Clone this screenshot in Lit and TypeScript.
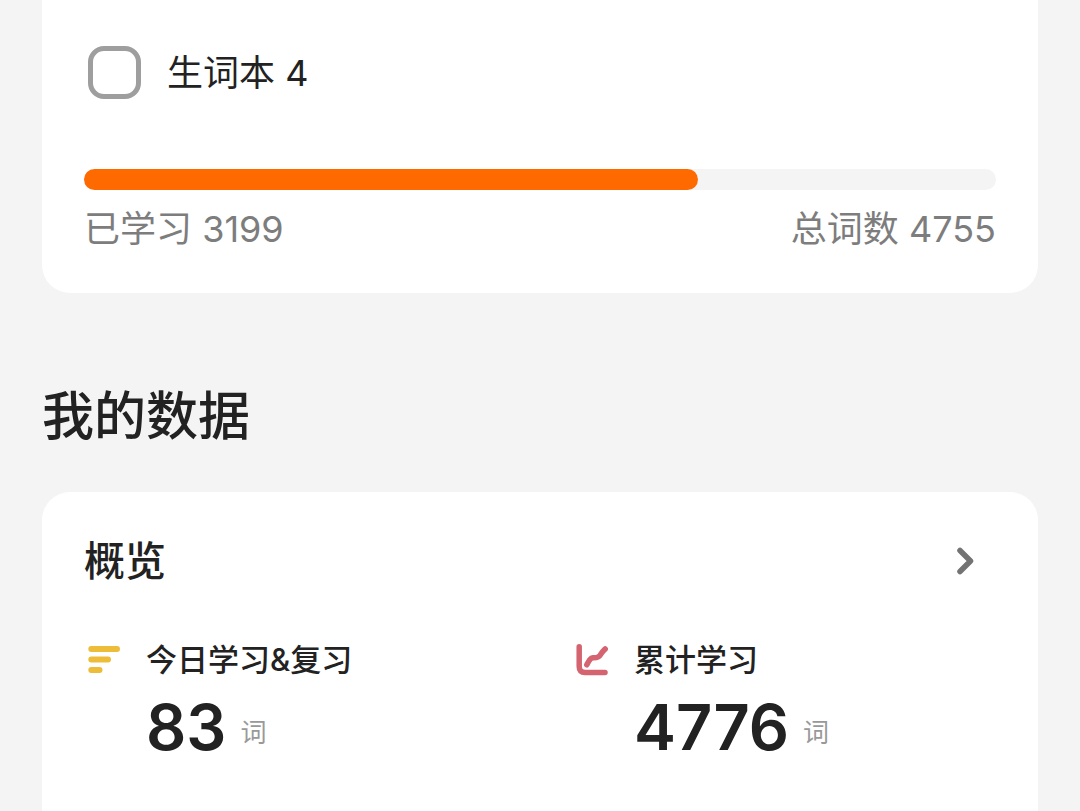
import { LitElement, html, css, svg } from "lit";
import { customElement, property, state } from "lit/decorators.js";

const barsIcon = svg`
  <svg viewBox="0 0 36 36" width="36" height="36" fill="none" stroke="#edbd3a" stroke-width="6" stroke-linecap="round" aria-hidden="true">
    <path d="M7.3 7H33M7.3 17.5H24M7.3 28H15.5"></path>
  </svg>`;

const chartIcon = svg`
  <svg viewBox="0 0 36 36" width="36" height="36" fill="none" stroke="#d4646f" stroke-width="5.5" stroke-linecap="round" stroke-linejoin="round" aria-hidden="true">
    <path d="M7.2 4.8V24.5Q7.2 30.5 13.2 30.5H33"></path>
    <path d="M14.8 22.8C16.8 19 18.2 16 21 15.8C26 16.2 27.5 14.5 29 11.8C30.2 9.8 31.5 8.8 33.2 7"></path>
  </svg>`;

@customElement("stat-item")
class StatItem extends LitElement {
  @property() label = "";
  @property() value = "";
  @property() unit = "";
  @property() icon = "";

  static styles = css`
    :host {
      display: grid;
      grid-template-columns: 36px 1fr;
      column-gap: 26px;
      row-gap: 15px;
      align-items: center;
    }
    svg {
      display: block;
    }
    .label {
      font-size: 31px;
      line-height: 40px;
      font-weight: 500;
      white-space: nowrap;
    }
    .figure {
      grid-column: 2;
      display: flex;
      align-items: flex-end;
      gap: 14px;
    }
    .value {
      font-size: 63px;
      line-height: 64px;
      font-weight: 600;
    }
    .unit {
      font-size: 26px;
      line-height: 52px;
      color: #999999;
    }
  `;

  render() {
    return html`
      ${this.icon === "bars" ? barsIcon : chartIcon}
      <span class="label">${this.label}</span>
      <div class="figure">
        <span class="value">${this.value}</span>
        <span class="unit">${this.unit}</span>
      </div>
    `;
  }
}

@customElement("app-root")
class AppRoot extends LitElement {
  @state() private learned = 3199;
  @state() private total = 4755;

  static styles = css`
    :host {
      display: flex;
      flex-direction: column;
      box-sizing: border-box;
      min-height: 100vh;
      padding: 0 42px;
      background: #f4f4f4;
      color: #222222;
      font-family: Inter, "Noto Sans CJK SC", sans-serif;
    }
    .card {
      background: #ffffff;
      padding: 42px;
    }
    .books {
      padding-top: 46px;
      border-radius: 0 0 28px 28px;
    }
    .book {
      display: flex;
      align-items: center;
      gap: 26px;
      height: 53px;
      padding-left: 4px;
      font-size: 36px;
      line-height: 44px;
    }
    .check {
      appearance: none;
      box-sizing: border-box;
      width: 53px;
      height: 53px;
      margin: 0;
      border: 5px solid #9e9e9e;
      border-radius: 16px;
      background: #ffffff;
    }
    .check:checked {
      background: #ff6a00;
      border-color: #ff6a00;
    }
    .track {
      height: 21px;
      margin-top: 70px;
      border-radius: 11px;
      background: #f4f4f4;
    }
    .fill {
      height: 100%;
      border-radius: 11px;
      background: #ff6a00;
    }
    .totals {
      display: flex;
      justify-content: space-between;
      margin-top: 17px;
      font-size: 36px;
      line-height: 44px;
      color: #7d7d7d;
    }
    .title {
      margin: 88px 0 39px;
      font-size: 52px;
      line-height: 72px;
      font-weight: 500;
    }
    .overview {
      flex: 1;
      border-radius: 28px 28px 0 0;
    }
    .head {
      display: flex;
      align-items: center;
      justify-content: space-between;
    }
    .subtitle {
      margin: 0;
      font-size: 41px;
      line-height: 54px;
      font-weight: 500;
    }
    .more {
      display: flex;
      padding: 0 16px;
      border: 0;
      background: none;
      cursor: pointer;
    }
    .stats {
      display: grid;
      grid-template-columns: 1fr 1fr;
      gap: 64px;
      margin-top: 52px;
    }
  `;

  render() {
    return html`
      <section class="card books">
        <div class="book">
          <input class="check" type="checkbox" id="new-words" />
          <label for="new-words">生词本 4</label>
        </div>
        <div class="track" role="progressbar" aria-label="已学习" aria-valuemin="0" aria-valuemax=${this.total} aria-valuenow=${this.learned}>
          <div class="fill" style="width:${(this.learned / this.total) * 100}%"></div>
        </div>
        <div class="totals">
          <span>已学习 ${this.learned}</span>
          <span>总词数 ${this.total}</span>
        </div>
      </section>
      <h1 class="title">我的数据</h1>
      <section class="card overview">
        <div class="head">
          <h2 class="subtitle">概览</h2>
          <button class="more" type="button" aria-label="概览">
            <svg viewBox="0 0 30 36" width="30" height="36" fill="none" stroke="#737373" stroke-width="5.5" stroke-linecap="round" stroke-linejoin="round" aria-hidden="true">
              <path d="M10 7.5L20.5 18L10 28.5"></path>
            </svg>
          </button>
        </div>
        <div class="stats">
          <stat-item icon="bars" label="今日学习&复习" value="83" unit="词"></stat-item>
          <stat-item icon="chart" label="累计学习" value="4776" unit="词"></stat-item>
        </div>
      </section>
    `;
  }
}
